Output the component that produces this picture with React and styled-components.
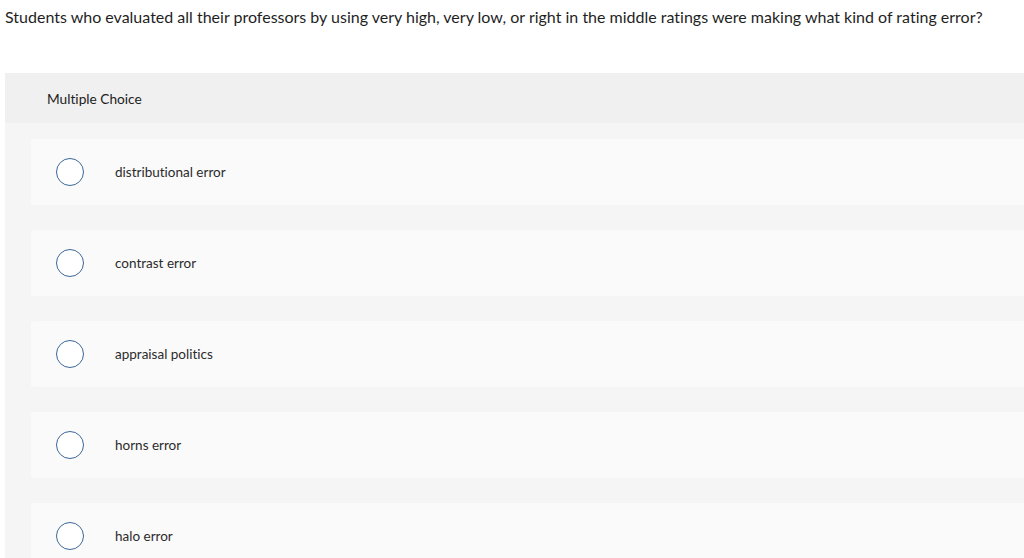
import React from "react";
import styled, { createGlobalStyle } from "styled-components";

const Global = createGlobalStyle`
  html, body { margin: 0; padding: 0; background: #fff; }
  body {
    font-family: Lato, "Open Sans", Arial, sans-serif;
    font-variant-ligatures: none;
    color: #333;
  }
`;

const Page = styled.div`
  width: 1024px;
  height: 558px;
  overflow: hidden;
`;

const Question = styled.p`
  margin: 0;
  padding: 7px 0 0 5px;
  height: 73px;
  box-sizing: border-box;
  font-size: 16px;
  line-height: 20px;
  color: #1f1f1f;
`;

const Panel = styled.section`
  margin-left: 5px;
  background: #f5f5f5;
`;

const Header = styled.div`
  height: 50px;
  background: #f0f0f0;
  display: flex;
  align-items: center;
  padding-left: 42px;
  font-size: 13.7px;
  color: #222;
`;

const List = styled.div`
  display: flex;
  flex-direction: column;
  gap: 25px;
  padding: 16px 0 0 26px;
`;

const Option = styled.label`
  height: 66px;
  background: #fafafa;
  border-radius: 3px 0 0 3px;
  display: flex;
  align-items: center;
  padding-left: 25px;
  font-size: 13.5px;
  color: #2b2b2b;
  cursor: pointer;
`;

const Radio = styled.span`
  width: 26px;
  height: 26px;
  border: 1.2px solid #3c6797;
  border-radius: 50%;
  background: #fff;
  flex: none;
  margin-right: 31px;
`;

const options = [
  "distributional error",
  "contrast error",
  "appraisal politics",
  "horns error",
  "halo error",
];

export default function App() {
  return (
    <Page>
      <Global />
      <Question>
        Students who evaluated all their professors by using very high, very low, or right in the middle ratings were making what kind of rating error?
      </Question>
      <Panel>
        <Header>Multiple Choice</Header>
        <List>
          {options.map((o) => (
            <Option key={o}>
              <Radio />
              {o}
            </Option>
          ))}
        </List>
      </Panel>
    </Page>
  );
}
